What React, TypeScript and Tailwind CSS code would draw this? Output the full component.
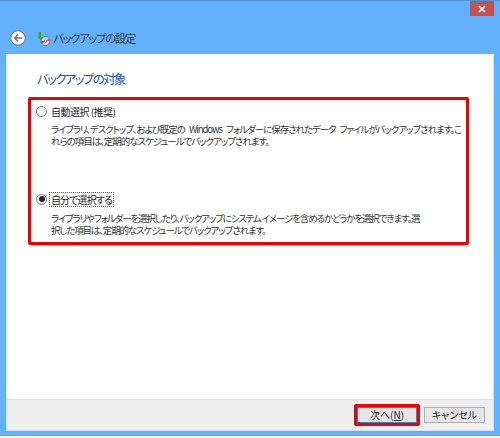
const jp = "font-['Noto_Sans_CJK_JP','Noto_Sans',sans-serif] [font-feature-settings:'palt']";

function BackButton() {
  return (
    <svg width="16" height="16" viewBox="0 0 16 16" className="shrink-0">
      <circle cx="8" cy="8" r="7.2" fill="#fff" stroke="#6b7785" strokeWidth="1" />
      <path d="M12 8H5M8 4.8 4.8 8 8 11.2" fill="none" stroke="#6d7680" strokeWidth="1.6" />
    </svg>
  );
}

function BackupIcon() {
  return (
    <svg width="15" height="15" viewBox="0 0 15 15" className="shrink-0">
      <circle cx="9.5" cy="10" r="4.5" fill="#d9d6dc" stroke="#5f5a66" strokeWidth="0.8" />
      <path d="M9.5 10 13 7.5A4.5 4.5 0 0 1 14 10Z" fill="#c0504d" />
      <path d="M9.5 10 6 13A4.5 4.5 0 0 1 5 10Z" fill="#5577aa" />
      <circle cx="9.5" cy="10" r="1.2" fill="#fff" stroke="#555" strokeWidth="0.5" />
      <path d="M2.5 1h2.5v5l2 0L4.8 10 1.5 6h1Z" fill="#3fa535" />
    </svg>
  );
}

function Radio({ checked }: { checked?: boolean }) {
  return (
    <span className="flex h-[11px] w-[11px] shrink-0 items-center justify-center rounded-full border border-[#7a7a7a] bg-white">
      {checked && <span className="h-[6px] w-[6px] rounded-full bg-[#222]" />}
    </span>
  );
}

function Option({
  label,
  checked,
  lines,
  className,
  bodyClass,
}: {
  label: string;
  checked?: boolean;
  lines: string[];
  className?: string;
  bodyClass: string;
}) {
  return (
    <div className={className}>
      <div className="flex h-[16px] items-center gap-[2px]">
        <Radio checked={checked} />
        <span
          className={
            checked
              ? "border border-dotted border-[#555] px-[1px] text-[10px] leading-[13px] tracking-[-0.9px] text-[#222]"
              : "px-[2px] text-[10px] leading-[13px] tracking-[-0.5px] text-[#222]"
          }
        >
          {label}
        </span>
      </div>
      <div className={`pl-[15px] text-[9.5px] leading-[12px] whitespace-nowrap text-[#333] ${bodyClass}`}>
        {lines.map((l) => (
          <div key={l}>{l}</div>
        ))}
      </div>
    </div>
  );
}

export default function App() {
  return (
    <div className={`h-[438px] w-[500px] overflow-hidden bg-white ${jp}`}>
      <div className="flex h-[436px] w-[500px] flex-col border-t border-[#4f93d6] bg-[#63b0fd] px-[6px] pb-[5px]">
        <div className="flex h-[53px] shrink-0 flex-col">
          <div className="flex justify-end">
            <div className="flex h-[15px] w-[24px] items-center justify-center bg-[#c75050] text-white">
              <svg width="8" height="8" viewBox="0 0 8 8">
                <path d="M1 1 7 7M7 1 1 7" stroke="#fff" strokeWidth="1.6" />
              </svg>
            </div>
          </div>
          <div className="mt-[14px] flex items-center gap-[10px] pl-[4px]">
            <BackButton />
            <div className="flex items-center gap-[2px]">
              <BackupIcon />
              <span className="text-[11.5px] leading-[16px] tracking-[-1.4px] text-[#3a3a3a]">バックアップの設定</span>
            </div>
          </div>
        </div>
        <div className="flex min-h-0 flex-1 flex-col border border-t-0 border-[#cfe3f7] bg-white">
          <div className="flex-1 pt-[16px] pl-[21px]">
            <h1 className="pl-[9px] text-[12.5px] leading-[18px] font-normal tracking-[-1.7px] text-[#1f4e9c]">バックアップの対象</h1>
            <div className="mt-[9px] h-[148px] w-[441px] rounded-[2px] border-[3px] border-[#f00000] pt-[3px] pl-[5px]">
              <Option
                label="自動選択 (推奨)"
                bodyClass="mt-[4px] tracking-[-1.05px] [word-spacing:3px]"
                lines={[
                  "ライブラリ、デスクトップ、および既定の Windows フォルダーに保存されたデータ ファイルがバックアップされます。こ",
                  "れらの項目は、定期的なスケジュールでバックアップされます。",
                ]}
              />
              <Option
                className="mt-[44px]"
                label="自分で選択する"
                checked
                bodyClass="mt-[5px] tracking-[-1.15px]"
                lines={[
                  "ライブラリやフォルダーを選択したり、バックアップにシステム イメージを含めるかどうかを選択できます。選",
                  "択した項目は、定期的なスケジュールでバックアップされます。",
                ]}
              />
            </div>
          </div>
          <div className="flex h-[31px] shrink-0 items-center justify-end gap-[4px] border-t border-[#dfdfdf] bg-[#efefef] pr-[8px]">
            <div className="rounded-[2px] border-[3px] border-[#f00000] p-0">
              <button
                type="button"
                className="flex h-[16px] w-[60px] items-center justify-center border border-[#3c7fb1] bg-[#e6e6e6] text-[10px] leading-none text-[#222]"
              >
                次へ(<span className="underline">N</span>)
              </button>
            </div>
            <button
              type="button"
              className="flex h-[16px] w-[61px] items-center justify-center border border-[#acacac] bg-[#e6e6e6] text-[10px] leading-none text-[#222]"
            >
              キャンセル
            </button>
          </div>
        </div>
      </div>
    </div>
  );
}
